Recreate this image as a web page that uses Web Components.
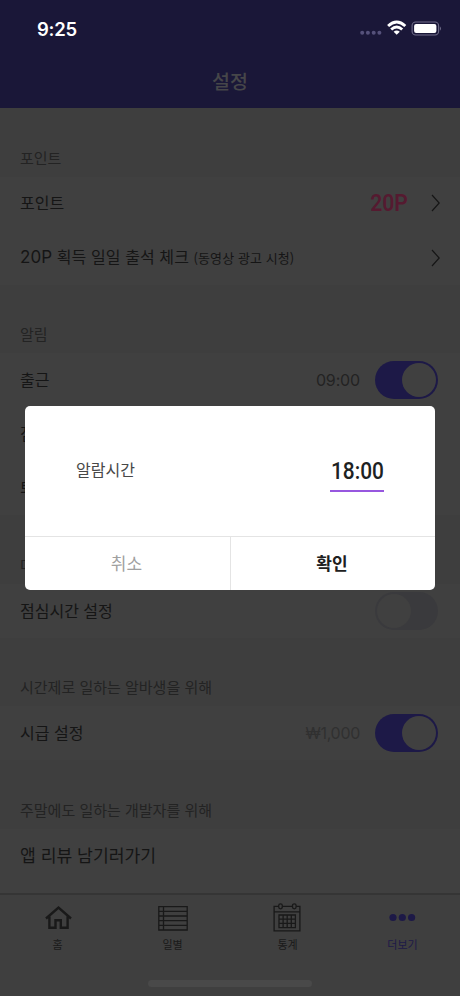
<!DOCTYPE html>
<html lang="ko"><head><meta charset="utf-8"><title>설정</title>
<style>
body{margin:0;background:#404040;font-family:"Noto Sans CJK KR",sans-serif;overflow:hidden}
</style></head><body>
<settings-app></settings-app>
<script>
const define=(name,html,setup)=>{
  const t=document.createElement('template');t.innerHTML=html;
  customElements.define(name,class extends HTMLElement{
    constructor(){super();this.attachShadow({mode:'open'}).append(t.content.cloneNode(true));}
    connectedCallback(){if(setup)setup(this,this.shadowRoot);}
  });
};

define('status-bar',`<style>
:host{display:flex;height:57px;box-sizing:border-box;padding:0 17px 0 37px;align-items:center;justify-content:space-between}
.t{font:600 18.5px/20px Inter,sans-serif;color:#fff;letter-spacing:-.25px}
svg{display:block}
</style><span class="t">9:25</span>
<svg width="84" height="20" viewBox="0 0 84 20">
<g fill="#55517a"><circle cx="3.2" cy="13.7" r="2"/><circle cx="8.9" cy="13.7" r="2"/><circle cx="14.7" cy="13.7" r="2"/><circle cx="20.4" cy="13.7" r="2"/></g>
<g fill="none" stroke="#fff" stroke-width="2.9"><path d="M29.1 7Q37.7-1 46.3 7"/><path d="M32.2 10.5Q37.7 5.5 43.2 10.5"/></g><path d="M34.6 12.8Q37.7 10 40.8 12.8L37.7 15.8Z" fill="#fff"/>
<rect x="53.1" y="3" width="26.5" height="13" rx="3.6" fill="none" stroke="#706d8a" stroke-width="1.1"/><rect x="55.1" y="4.9" width="22.3" height="9.2" rx="2" fill="#fff"/><path d="M80.9 7.2Q83.1 9.5 80.9 11.8Z" fill="#706d8a"/></svg>`);

define('nav-header',`<style>
:host{display:block;height:108px;background:#1a1738}
h1{margin:0;height:51px;line-height:47px;text-align:center;font-size:19.5px;font-weight:500;color:#464649}
</style><status-bar></status-bar><h1><slot></slot></h1>`);

define('settings-group',`<style>
:host{display:block}
h2{margin:0;height:68.6px;box-sizing:border-box;padding:39.7px 20px 0;background:#3e3e3e;font-size:15px;line-height:20px;font-weight:400;color:#232323;white-space:pre}
</style><h2></h2><slot></slot>`,(e,r)=>{r.querySelector('h2').textContent=e.getAttribute('label');});

define('settings-row',`<style>
:host{display:flex;height:54px;box-sizing:border-box;padding:0 22px 0 20px;align-items:center;background:#404040;color:#151515;font-size:16px;line-height:24px}
:host([large]){font-size:17.2px}
:host([first]){padding-bottom:1.4px}
:host([wide]){letter-spacing:.09px}
.l{flex:1;padding-bottom:2px;white-space:pre}
</style><span class="l"><slot></slot></span><slot name="end"></slot>`);

define('toggle-switch',`<style>
:host{display:flex;width:63px;height:38px;box-sizing:border-box;border-radius:19px;padding:2px;background:#3a3a3d;margin-left:15px}
:host([on]){background:#1d1947;justify-content:flex-end}
i{width:34px;height:34px;border-radius:50%;background:#404040}
</style><i></i>`);

define('chevron-icon',`<style>:host{display:block;margin-right:-5px}svg{display:block}</style><svg width="12" height="20" viewBox="0 0 12 20"><path d="M1 2L8.2 10L1 18" fill="none" stroke="#161616" stroke-width="1.2"/></svg>`);

define('dim-value',`<style>:host{display:block;font:400 16px/20px Inter,"Noto Sans CJK KR",sans-serif;color:#232323;letter-spacing:-.15px}:host([faint]){color:#303030;letter-spacing:-.3px}</style><slot></slot>`);

define('point-value',`<style>:host{display:block;font:600 23.5px/28px Roboto,sans-serif;color:#551a30;transform:scaleX(.9);transform-origin:right;margin-right:23px}</style><slot></slot>`);

define('small-note',`<style>:host{display:inline;font-size:13px}</style><slot></slot>`);
define('latin-text',`<style>:host{display:inline;font:400 17px/1 Inter,sans-serif}</style><slot></slot>`);

define('tab-item',`<style>
:host{display:flex;flex:1;flex-direction:column;align-items:center;padding-top:8px;color:#191919;font-size:11px;line-height:16px}
:host([active]){color:#1d1947}
::slotted(svg){display:block;width:32px;height:32px;margin-bottom:1px}
</style><slot name="icon"></slot><span><slot></slot></span>`);

define('tab-bar',`<style>
:host{display:flex;position:absolute;left:0;top:893px;width:460px;height:103px;box-sizing:border-box;background:#3f3f3f;border-top:2px solid #353535}
.h{position:absolute;left:148px;top:85px;width:164px;height:7px;border-radius:4px;background:#494949}
</style><slot></slot><div class="h"></div>`);

define('time-dialog',`<style>
:host{display:grid;grid-template-rows:130px 54px;position:absolute;left:25px;top:406px;width:410px;height:184px;background:#fff;border-radius:5px;overflow:hidden}
.b{display:flex;justify-content:space-between;align-items:flex-start;padding:51px 51px 0;color:#484848;font-size:16px;line-height:24px}
.v{width:54px;height:34px;margin-top:1px;box-sizing:border-box;border-bottom:2px solid #9757df;display:flex;justify-content:center}
.v span{font:500 24px/26px Roboto,sans-serif;color:#1d2222;transform:scaleX(.87)}
.a{display:grid;grid-template-columns:205px 205px;border-top:1px solid #e4e4e4}
.a div{text-align:center;line-height:51px;font-size:17px;color:#a0a0a0;padding-right:2px;box-sizing:border-box}
.a div+div{font-weight:700;color:#202020;border-left:1px solid #e4e4e4}
</style><div class="b"><span>알람시간</span><div class="v"><span>18:00</span></div></div><div class="a"><div>취소</div><div>확인</div></div>`);

define('settings-app',`<style>
:host{display:block;position:relative;width:460px;height:996px;overflow:hidden;background:#404040}
</style>
<nav-header>설정</nav-header>
<settings-group label="포인트">
<settings-row first>포인트<point-value slot="end">20P</point-value><chevron-icon slot="end"></chevron-icon></settings-row>
<settings-row wide><latin-text>20P</latin-text> 획득 일일 출석 체크 <small-note>(동영상 광고 시청)</small-note><chevron-icon slot="end"></chevron-icon></settings-row>
</settings-group>
<settings-group label="알림">
<settings-row>출근<dim-value slot="end">09:00</dim-value><toggle-switch slot="end" on></toggle-switch></settings-row>
<settings-row>점</settings-row>
<settings-row>퇴</settings-row>
</settings-group>
<settings-group label="다">
<settings-row>점심시간 설정<toggle-switch slot="end"></toggle-switch></settings-row>
</settings-group>
<settings-group label="시간제로 일하는 알바생을 위해">
<settings-row>시급 설정<dim-value slot="end" faint>₩1,000</dim-value><toggle-switch slot="end" on></toggle-switch></settings-row>
</settings-group>
<settings-group label="주말에도 일하는 개발자를 위해">
<settings-row large>앱 리뷰 남기러가기</settings-row>
</settings-group>
<tab-bar>
<tab-item><svg slot="icon" viewBox="0 0 32 32" fill="none" stroke="#191919" stroke-width="2.4"><path d="M4 15.5L16.5 4.5L29 15.5M7.4 13.5V24.8H13.5V17.2H18.8V24.8H25.6V13.5"/></svg>홈</tab-item>
<tab-item><svg slot="icon" viewBox="0 0 32 32" fill="none" stroke="#191919" stroke-width="1.3"><path d="M1.8 3.6H30.2V27H1.8ZM6.5 4V27M1.8 8.3H30.2M1.8 13H30.2M1.8 17.6H30.2M1.8 22.3H30.2"/></svg>일별</tab-item>
<tab-item><svg slot="icon" viewBox="0 0 32 32" fill="none" stroke="#191919" stroke-width="1.3"><path d="M6.6 3.3H2.1V27.8H27.9V3.3H24.2M10.7 3.3H20.3M2.1 8.8H27.9M7 12H23.4V24.6H7ZM11.1 12V24.6M15.2 12V24.6M19.3 12V24.6M7 16.2H23.4M7 20.4H23.4"/><rect x="6.7" y=".8" width="3.6" height="5" rx="1.8"/><rect x="20.5" y=".8" width="3.6" height="5" rx="1.8"/></svg>통계</tab-item>
<tab-item active><svg slot="icon" viewBox="0 0 32 32" fill="#1d1947"><circle cx="6" cy="14.5" r="3.6"/><circle cx="15.3" cy="14.5" r="3.6"/><circle cx="24.6" cy="14.5" r="3.6"/></svg>더보기</tab-item>
</tab-bar>
<time-dialog></time-dialog>`);
</script></body></html>
